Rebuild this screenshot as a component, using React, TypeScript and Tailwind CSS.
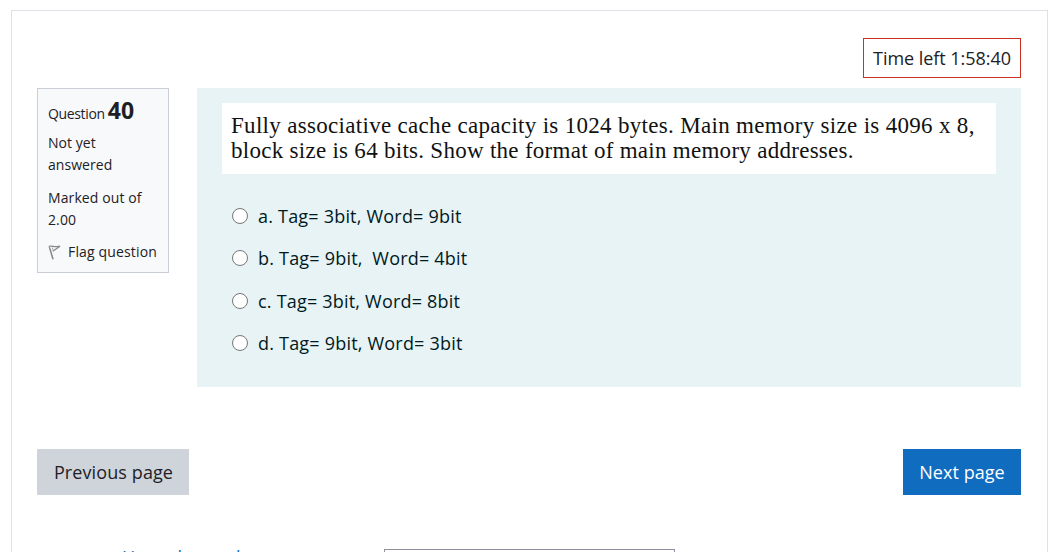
type Answer = {
  id: string;
  text: string;
};

const answers: Answer[] = [
  { id: "a", text: "Tag= 3bit, Word= 9bit" },
  { id: "b", text: "Tag= 9bit,\u00a0 Word= 4bit" },
  { id: "c", text: "Tag= 3bit, Word= 8bit" },
  { id: "d", text: "Tag= 9bit, Word= 3bit" },
];

const FlagIcon: React.FC = () => (
  <svg width="13" height="15" viewBox="0 0 13 15" fill="none" aria-hidden="true">
    <path d="M1.2 1.2 5 14.2" stroke="#858585" strokeWidth="1.5" />
    <path
      d="M1 1.3C4 .5 7.5 2.3 12 1.2L4.8 6.3"
      fill="#f3f3f3"
      stroke="#8a8a8a"
      strokeWidth="1.2"
    />
    <path d="M4.2 2.5 5.3 5.5" stroke="#aaa" strokeWidth="1" />
  </svg>
);

const QuestionInfo: React.FC = () => (
  <aside className="h-[185px] w-[132px] shrink-0 border border-[#caced6] bg-[#f8f9fb] px-[10px] pt-[10px] text-sm leading-[22px] text-[#1d2125]">
    <h3 className="flex h-[22px] items-baseline gap-[3px] whitespace-nowrap">
      <span className="tracking-[-0.35px]">Question</span>
      <span className="text-[23px] leading-[22px] font-bold">40</span>
    </h3>
    <p className="mt-[11px] tracking-[0.05px]">
      Not yet
      <br />
      answered
    </p>
    <p className="mt-[11px] tracking-[0.1px]">
      Marked out of
      <br />
      2.00
    </p>
    <a className="mt-[10px] flex items-center gap-[7px] whitespace-nowrap">
      <FlagIcon />
      <span className="tracking-[0.15px]">Flag question</span>
    </a>
  </aside>
);

const QuestionBody: React.FC = () => (
  <section className="h-[299px] flex-1 bg-[#e7f3f5] px-[25px] pt-[15px] text-[#001a1e]">
    <div className="h-[71px] bg-white pt-[11px] pl-[9px] font-['Liberation_Serif',serif] text-[23px] leading-[24.5px] whitespace-nowrap text-[#111]">
      <p className="tracking-[0.31px]">
        Fully associative cache capacity is 1024 bytes. Main memory size is 4096 x 8,
      </p>
      <p className="tracking-[0.28px]">
        block size is 64 bits. Show the format of main memory addresses.
      </p>
    </div>
    <div className="mt-[21px] flex flex-col pl-[10px]">
      {answers.map((answer) => (
        <label key={answer.id} className="flex h-[42.3px] items-center">
          <input
            type="radio"
            name="answer"
            className="size-4 shrink-0 appearance-none rounded-full border border-[#767676] bg-white"
          />
          <span className="ml-[10px] text-lg tracking-[0.2px] whitespace-nowrap">
            {answer.id}. {answer.text}
          </span>
        </label>
      ))}
    </div>
  </section>
);

const App: React.FC = () => (
  <div className="h-[552px] overflow-hidden bg-white pt-[10px] pl-[11px] font-['Open_Sans',sans-serif] text-[#1d2125]">
    <main className="h-[560px] w-[1037px] border border-[#dee2e6] pt-[27px] pr-[26px] pl-[25px]">
      <div className="flex justify-end">
        <div className="flex h-10 w-[158px] items-center justify-center border border-[#ca3120] text-lg tracking-[-0.05px] whitespace-nowrap">
          Time left 1:58:40
        </div>
      </div>
      <div className="mt-[10px] flex gap-7">
        <QuestionInfo />
        <QuestionBody />
      </div>
      <div className="mt-[62px] flex justify-between text-lg">
        <button className="h-[46px] w-[152px] bg-[#ced4da] pl-px tracking-[0.1px] whitespace-nowrap">
          Previous page
        </button>
        <button className="h-[46px] w-[118px] bg-[#0f6cbf] tracking-[0.05px] whitespace-nowrap text-white">
          Next page
        </button>
      </div>
      <nav className="mt-[48px] flex items-start">
        <a className="w-[347px] pl-[85px] text-lg whitespace-nowrap text-[#0f6cbf]">
          Home lesson hours
        </a>
        <select className="mt-[6px] h-10 w-[291px] appearance-none border border-[#8f919e] bg-white px-3">
          <option>Jump to...</option>
        </select>
      </nav>
    </main>
  </div>
);

export default App;
